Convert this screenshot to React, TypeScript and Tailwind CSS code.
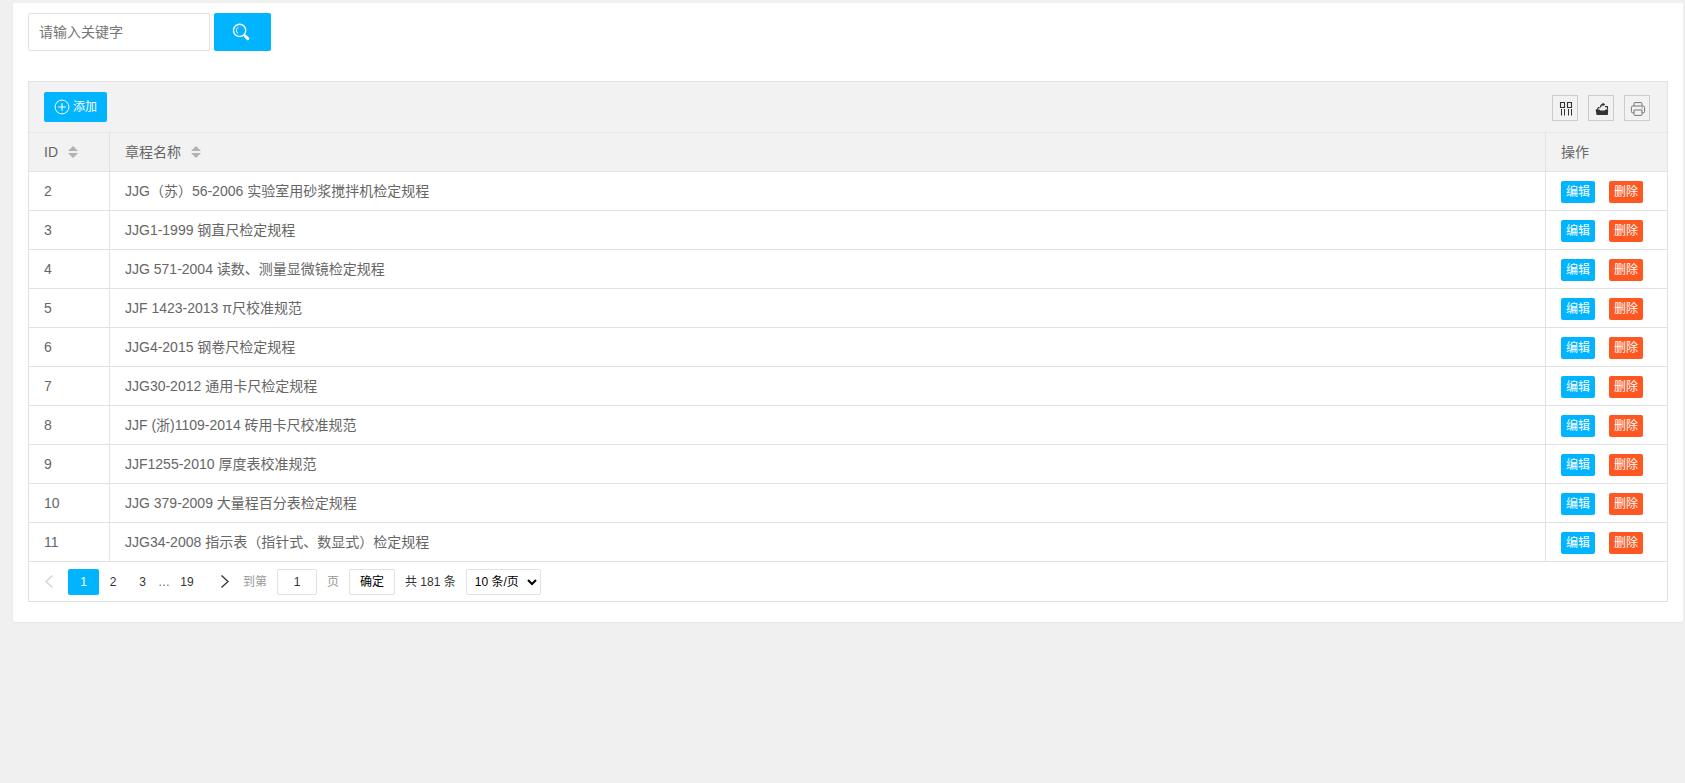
import { useState } from "react";
import * as React from "react";

const FONT =
  "font-['Liberation_Sans','Noto_Sans_CJK_SC',sans-serif] text-[14px] leading-6 text-[#666]";
const CELL = "border-b border-[#e2e2e2] px-[15px] py-0 text-left font-normal";
const TOOL =
  "flex size-[26px] cursor-pointer items-center justify-center border border-[#ccc] pt-[2px] pl-[2px] text-[#333]";
const ROW_BUTTON =
  "h-[22px] w-[34px] cursor-pointer rounded-xs text-center text-[12px] leading-[22px] text-white";
const PAGE = "flex h-[26px] cursor-pointer items-center justify-center rounded-xs";

interface Regulation {
  id: number;
  name: string;
}

const REGULATIONS: Regulation[] = [
  { id: 2, name: "JJG（苏）56-2006 实验室用砂浆搅拌机检定规程" },
  { id: 3, name: "JJG1-1999 钢直尺检定规程" },
  { id: 4, name: "JJG 571-2004 读数、测量显微镜检定规程" },
  { id: 5, name: "JJF 1423-2013 π尺校准规范" },
  { id: 6, name: "JJG4-2015 钢卷尺检定规程" },
  { id: 7, name: "JJG30-2012 通用卡尺检定规程" },
  { id: 8, name: "JJF (浙)1109-2014 砖用卡尺校准规范" },
  { id: 9, name: "JJF1255-2010 厚度表校准规范" },
  { id: 10, name: "JJG 379-2009 大量程百分表检定规程" },
  { id: 11, name: "JJG34-2008 指示表（指针式、数显式）检定规程" },
];

export default function App(): React.JSX.Element {
  return (
    <div lang="zh-CN" className={`min-h-screen bg-[#f0f0f0] pt-[3px] pr-[2px] pl-[13px] ${FONT}`}>
      <main className="rounded-xs bg-white px-[15px] pt-[10px] pb-5 shadow-[0_1px_2px_rgba(0,0,0,0.05)]">
        <SearchBar />
        <section className="mt-[30px] border border-[#e2e2e2]">
          <Toolbar />
          <RegulationTable rows={REGULATIONS} />
          <Pager />
        </section>
      </main>
    </div>
  );
}

function SearchBar(): React.JSX.Element {
  const [keyword, setKeyword] = useState("");

  return (
    <form className="flex gap-1" onSubmit={(event) => event.preventDefault()}>
      <input
        className="h-[38px] w-[182px] rounded-xs border border-[#e2e2e2] bg-white px-[10px] outline-none placeholder:text-[#757575] focus:border-[#c9c9c9]"
        placeholder="请输入关键字"
        aria-label="请输入关键字"
        value={keyword}
        onChange={(event) => setKeyword(event.target.value)}
      />
      <button
        type="submit"
        aria-label="搜索"
        className="flex h-[38px] w-[57px] cursor-pointer items-center justify-center rounded-xs bg-[#01b4ff] pr-[3px] text-white"
      >
        <svg className="size-[18px]" viewBox="0 0 18 18" fill="none" stroke="currentColor">
          <circle cx="7.6" cy="7.4" r="6.1" strokeWidth="1.4" />
          <path d="M6.4 4.2c-2.4 1.2-2.6 4.8-.4 6.2" strokeWidth="1" />
          <path d="m12 11.8 1.6 1.6" strokeWidth="1.3" />
          <path d="m13.4 13.2 2.4 2.4" strokeWidth="3" strokeLinecap="round" />
        </svg>
      </button>
    </form>
  );
}

function Toolbar(): React.JSX.Element {
  return (
    <div className="flex h-[51px] items-center justify-between border-b border-[#e6e6e6] bg-[#f2f2f2] pr-[17px] pl-[15px]">
      <button
        type="button"
        className="flex h-[30px] w-[63px] cursor-pointer items-center justify-center gap-[3px] rounded-xs bg-[#01b4ff] text-[12px] text-white"
      >
        <svg className="size-4" viewBox="0 0 16 16" fill="none" stroke="currentColor">
          <circle cx="8" cy="8" r="6.9" strokeWidth="1" />
          <path d="M8 4.2v7.6M4.2 8h7.6" strokeWidth="1.1" />
        </svg>
        添加
      </button>
      <div className="flex gap-[10px] pt-px">
        <button type="button" aria-label="筛选列" className={TOOL}>
          <svg className="size-4" viewBox="0 0 16 16" fill="none" stroke="currentColor">
            <path d="M2.5 1.5h4v5h-4zM9.5 1.5h4v5h-4z" strokeWidth="1.1" />
            <path d="M3.5 8v6.5M6.5 8v6.5M10.5 8v6.5M13.5 8v6.5" strokeWidth="1" />
          </svg>
        </button>
        <button type="button" aria-label="导出" className={TOOL}>
          <svg className="size-4" viewBox="0 0 16 16" fill="currentColor">
            <path d="M1.6 8.6h3.8l1 1h4.2l1-1h2.6L13.8 14H2.6z" />
            <path
              d="M3 8.8 4.4 6.6h1.2M11 5.6h2.4v3.2M6.4 6.6C6.4 4.4 7.4 3.4 9 3.4"
              fill="none"
              stroke="currentColor"
              strokeWidth="1.1"
            />
            <path d="M8.6 1.4 11.2 3.4 8.6 5.4z" />
          </svg>
        </button>
        <button type="button" aria-label="打印" className={TOOL}>
          <svg className="size-4 text-[#777]" viewBox="0 0 16 16" fill="none" stroke="currentColor">
            <path d="M4 5V2.6a1 1 0 0 1 1-1h6a1 1 0 0 1 1 1V5" />
            <path d="M4 11.8H2.6a1.2 1.2 0 0 1-1.2-1.2V6.4a1.4 1.4 0 0 1 1.4-1.4h10.4a1.4 1.4 0 0 1 1.4 1.4v4.2a1.2 1.2 0 0 1-1.2 1.2H12" />
            <path d="M4 9h8v4.4a1 1 0 0 1-1 1H5a1 1 0 0 1-1-1zM11.6 7h1.2" />
          </svg>
        </button>
      </div>
    </div>
  );
}

function SortIcon(): React.JSX.Element {
  return (
    <svg className="h-3 w-[10px]" viewBox="0 0 10 12" fill="#b2b2b2">
      <path d="M0 5h10L5 0zM0 7h10l-5 5z" />
    </svg>
  );
}

function RegulationTable({ rows }: { rows: Regulation[] }): React.JSX.Element {
  return (
    <table className="w-full table-fixed border-separate border-spacing-0">
      <thead className="bg-[#f2f2f2]">
        <tr className="h-[39px]">
          <th className={`${CELL} w-[81px] border-r`}>
            <button type="button" className="flex cursor-pointer items-center gap-[10px]">
              ID
              <SortIcon />
            </button>
          </th>
          <th className={`${CELL} border-r`}>
            <button type="button" className="flex cursor-pointer items-center gap-[10px]">
              章程名称
              <SortIcon />
            </button>
          </th>
          <th className={`${CELL} w-[121px]`}>操作</th>
        </tr>
      </thead>
      <tbody>
        {rows.map((row) => (
          <tr key={row.id} className="h-[39px] hover:bg-[#f2f2f2]">
            <td className={`${CELL} border-r`}>{row.id}</td>
            <td className={`${CELL} truncate border-r`}>{row.name}</td>
            <td className={CELL}>
              <div className="flex gap-[14px] pt-px">
                <button type="button" className={`${ROW_BUTTON} bg-[#01b4ff]`}>
                  编辑
                </button>
                <button type="button" className={`${ROW_BUTTON} bg-[#ff5722]`}>
                  删除
                </button>
              </div>
            </td>
          </tr>
        ))}
      </tbody>
    </table>
  );
}

function Pager(): React.JSX.Element {
  return (
    <nav className="flex h-[39px] items-center pl-[9px] text-[12px] text-[#333]">
      <button type="button" aria-label="上一页" disabled className={`${PAGE} w-[30px] pr-2 text-[#d2d2d2]`}>
        <Chevron d="M10.5 1.5 4 7.5l6.5 6" />
      </button>
      <button type="button" aria-current="page" className={`${PAGE} w-[31px] bg-[#01b4ff] text-white`}>
        1
      </button>
      <button type="button" className={`${PAGE} w-7`}>
        2
      </button>
      <button type="button" className={`${PAGE} w-[31px]`}>
        3
      </button>
      <span className="w-[11px] text-[#666]">…</span>
      <button type="button" className={`${PAGE} w-9`}>
        19
      </button>
      <button type="button" aria-label="下一页" className={`${PAGE} w-9 pl-[3px]`}>
        <Chevron d="m3.5 1.5 6.5 6-6.5 6" />
      </button>
      <label className="ml-[2px] flex items-center gap-[10px] text-[#999]">
        到第
        <input
          className="h-[26px] w-10 rounded-xs border border-[#e2e2e2] bg-white text-center text-[#333] outline-none"
          defaultValue="1"
        />
        页
      </label>
      <button
        type="button"
        className="ml-[10px] h-[26px] w-[46px] cursor-pointer rounded-xs border border-[#e2e2e2] bg-white text-black"
      >
        确定
      </button>
      <span className="ml-[10px]">共 181 条</span>
      <select
        aria-label="每页条数"
        defaultValue="10"
        className="ml-[10px] h-[26px] w-[75px] rounded-xs border border-[#e2e2e2] bg-white px-1 text-black outline-none"
      >
        <option value="10">10 条/页</option>
        <option value="20">20 条/页</option>
        <option value="50">50 条/页</option>
      </select>
    </nav>
  );
}

function Chevron({ d }: { d: string }): React.JSX.Element {
  return (
    <svg className="h-[15px] w-[14px]" viewBox="0 0 14 15" fill="none" stroke="currentColor" strokeWidth="1.3">
      <path d={d} />
    </svg>
  );
}
